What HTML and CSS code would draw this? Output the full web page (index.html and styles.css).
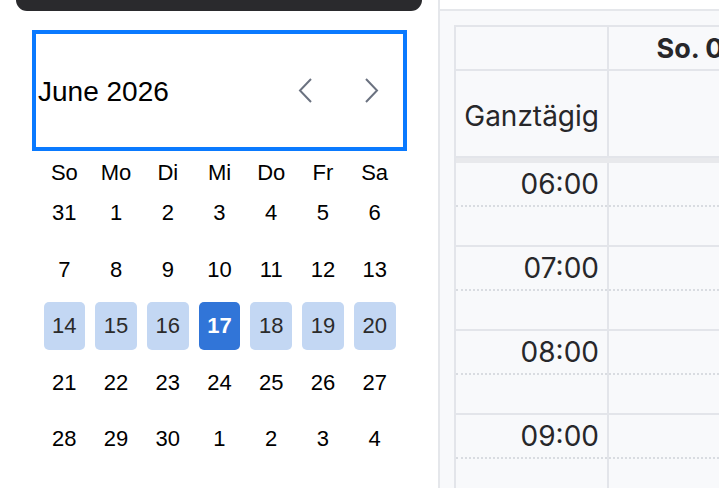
FILE: index.html
```html
<!DOCTYPE html>
<html lang="de">
<head>
  <meta charset="UTF-8">
  <meta name="viewport" content="width=device-width, initial-scale=1.0">
  <title>Kalender</title>
  <link rel="stylesheet" href="styles.css">
</head>
<body>

  <aside class="sidebar">
    <div class="topbar"></div>

    <div class="month">
      <div class="month-header">
        <span class="month-title">June 2026</span>
        <div class="month-nav">
          <button class="nav-btn" aria-label="Vorheriger Monat">
            <svg width="14" height="25" viewBox="0 0 14 25"><polyline points="13,1 2,12.5 13,24" /></svg>
          </button>
          <button class="nav-btn" aria-label="Nächster Monat">
            <svg width="14" height="25" viewBox="0 0 14 25"><polyline points="1,1 12,12.5 1,24" /></svg>
          </button>
        </div>
      </div>

      <div class="weekdays">
        <span>So</span><span>Mo</span><span>Di</span><span>Mi</span><span>Do</span><span>Fr</span><span>Sa</span>
      </div>

      <div class="days">
        <span class="day">31</span><span class="day">1</span><span class="day">2</span><span class="day">3</span><span class="day">4</span><span class="day">5</span><span class="day">6</span>
        <span class="day">7</span><span class="day">8</span><span class="day">9</span><span class="day">10</span><span class="day">11</span><span class="day">12</span><span class="day">13</span>
        <!-- aktuelle Woche -->
        <span class="day week">14</span><span class="day week">15</span><span class="day week">16</span><span class="day week today">17</span><span class="day week">18</span><span class="day week">19</span><span class="day week">20</span>
        <span class="day">21</span><span class="day">22</span><span class="day">23</span><span class="day">24</span><span class="day">25</span><span class="day">26</span><span class="day">27</span>
        <span class="day">28</span><span class="day">29</span><span class="day">30</span><span class="day">1</span><span class="day">2</span><span class="day">3</span><span class="day">4</span>
      </div>
    </div>
  </aside>

  <main class="schedule">
    <div class="schedule-top"></div>

    <div class="schedule-body">
      <div class="agenda">
        <div class="row head-row">
          <div class="cell time-col"></div>
          <div class="cell day-col day-name">So. 07.06.</div>
        </div>

        <div class="row allday-row">
          <div class="cell time-col allday-label">Ganztägig</div>
          <div class="cell day-col"></div>
        </div>

        <div class="divider"></div>

        <div class="row hour-row">
          <div class="cell time-col">
            <div class="half first"><span class="hour">06:00</span></div>
            <div class="half"></div>
          </div>
          <div class="cell day-col">
            <div class="half first"></div>
            <div class="half"></div>
          </div>
        </div>

        <div class="row hour-row">
          <div class="cell time-col">
            <div class="half first"><span class="hour">07:00</span></div>
            <div class="half"></div>
          </div>
          <div class="cell day-col">
            <div class="half first"></div>
            <div class="half"></div>
          </div>
        </div>

        <div class="row hour-row">
          <div class="cell time-col">
            <div class="half first"><span class="hour">08:00</span></div>
            <div class="half"></div>
          </div>
          <div class="cell day-col">
            <div class="half first"></div>
            <div class="half"></div>
          </div>
        </div>

        <div class="row hour-row">
          <div class="cell time-col">
            <div class="half first"><span class="hour">09:00</span></div>
            <div class="half"></div>
          </div>
          <div class="cell day-col">
            <div class="half first"></div>
            <div class="half"></div>
          </div>
        </div>
      </div>
    </div>
  </main>

</body>
</html>
```

FILE: styles.css
```css
* {
  margin: 0;
  padding: 0;
  box-sizing: border-box;
}

body {
  display: flex;
  height: 100vh;
  overflow: hidden;
  background-color: #fff;
  font-family: "Liberation Sans", Arial, sans-serif;
  color: #000;
}

/* ---------- Seitenleiste mit Monatsansicht ---------- */

.sidebar {
  width: 440px;
  flex-shrink: 0;
  padding: 0 16px;
  border-right: 2px solid #e5e7eb;
  background-color: #fff;
}

.topbar {
  height: 11px;
  background-color: #2a2a2d;
  border-radius: 0 0 11px 11px;
}

.month {
  margin: 19px 15px 0 16px;
}

.month-header {
  height: 121px;
  border: 4px solid #0a7aff;
  padding: 0 7px 0 2px;
  display: flex;
  align-items: center;
  justify-content: space-between;
}

.month-title {
  font-size: 28px;
  padding-top: 2px;
}

.month-nav {
  display: flex;
  gap: 19px;
}

.nav-btn {
  width: 48px;
  height: 40px;
  border: none;
  background: none;
  display: flex;
  align-items: center;
  justify-content: center;
  cursor: pointer;
}

.nav-btn polyline {
  fill: none;
  stroke: #6b7280;
  stroke-width: 2;
}

.weekdays,
.days {
  width: 352px;
  margin: 0 auto;
  display: grid;
  grid-template-columns: repeat(7, 1fr);
  column-gap: 10px;
  text-align: center;
}

.weekdays {
  margin-top: 9px;
  height: 25px;
  line-height: 25px;
  font-size: 22px;
}

.days {
  margin-top: 4px;
  row-gap: 8.6px;
  font-size: 22px;
}

.day {
  height: 48px;
  display: flex;
  align-items: center;
  justify-content: center;
}

.day.week {
  background-color: #c3d7f3;
  border-radius: 5px;
  color: #2b2b2b;
}

.day.today {
  background-color: #3175d8;
  color: #fff;
  font-weight: bold;
}

/* ---------- Tagesplan rechts ---------- */

.schedule {
  flex: 1;
  overflow: hidden;
  background-color: #f8f9fb;
  font-family: Inter, "Noto Sans", sans-serif;
  color: #27272a;
}

.schedule-top {
  height: 11px;
  background-color: #fff;
  border-bottom: 2px solid #e5e7eb;
}

.schedule-body {
  padding: 14px 0 0 14px;
}

.agenda {
  width: 400px;
  border-top: 2px solid #e3e5ea;
  border-left: 2px solid #e3e5ea;
}

.row {
  display: flex;
}

.cell {
  border-right: 2px solid #e3e5ea;
  border-bottom: 2px solid #e3e5ea;
}

.time-col {
  width: 153px;
  flex-shrink: 0;
}

.day-col {
  width: 228px;
  flex-shrink: 0;
}

.head-row .cell {
  height: 44px;
}

.day-name {
  display: flex;
  align-items: center;
  justify-content: center;
  font-size: 27px;
  font-weight: 700;
  white-space: nowrap;
}

.allday-row .cell {
  height: 87px;
}

.allday-label {
  display: flex;
  align-items: center;
  justify-content: flex-end;
  padding: 4px 8px 0 0;
  font-size: 28px;
}

.divider {
  height: 5px;
  background-color: #e8e9ec;
}

.hour-row .cell {
  height: 84px;
}

.half {
  height: 38px;
}

.half.first {
  height: 44px;
  border-bottom: 2px dotted #d9dce1;
}

.hour {
  display: block;
  text-align: right;
  padding: 4px 8px 0 0;
  font-size: 28px;
}
```
